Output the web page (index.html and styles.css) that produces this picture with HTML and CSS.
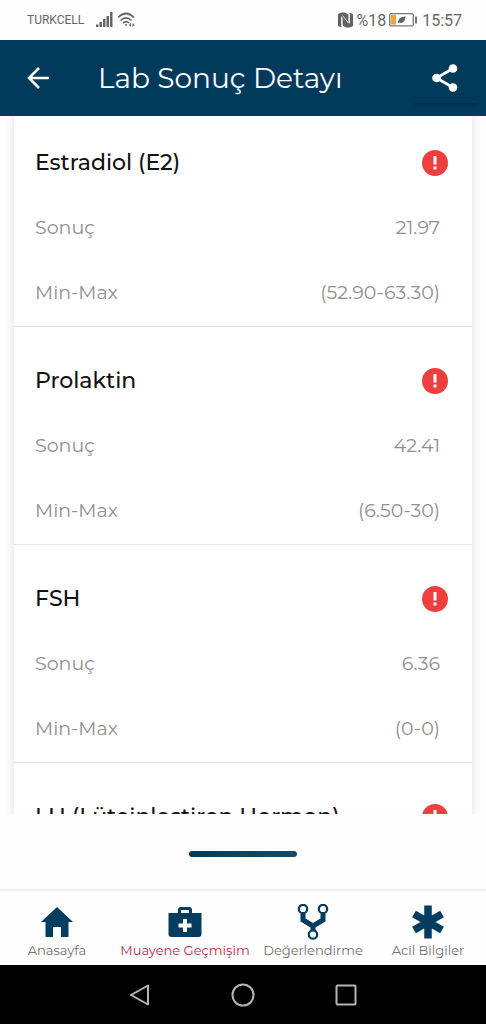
FILE: index.html
```html
<!DOCTYPE html>
<html lang="tr">
<head>
<meta charset="utf-8">
<meta name="viewport" content="width=device-width, initial-scale=1">
<title>Lab Sonuç Detayı</title>
<link rel="stylesheet" href="styles.css">
</head>
<body>
<div class="status">
  <div class="status-group">
    <span class="carrier">TURKCELL</span>
    <svg class="signal" width="17" height="16" viewBox="0 0 17 16" fill="#666"><path d="M0 12.500h2.500V15H0zM3.500 10H6v5H3.500zM7 7h2.500v8H7zM10.500 4H13v11h-2.500zM14 0h2.500v15H14z"/></svg>
    <svg width="18" height="16" viewBox="0 0 18 16" fill="none" stroke="#666" stroke-width="1.700"><path d="M1 5.500Q9-2.500 17 5.500M3.500 8.500Q9 3 14.500 8.500M6 11.200Q9 8 12 11"/><path d="M7.500 12.200h3l-1.500 2.300zM14 11l-2.200 2 2.200 2zM15.500 11l2.200 2-2.200 2z" fill="#666" stroke="none"/></svg>
  </div>
  <div class="status-group right">
    <svg width="15" height="16" viewBox="0 0 15 16"><path d="M3.500.5L0 2v12l3.500 1.500V5l7 8V2.800L7 .5zM11.500 15.500L15 14V2L11.500.5V11l-7-8v10.200L8 15.500z" fill="#626262"/><path d="M3.700 4.500v10M11.300 1.500v10M4.500 3.500l6 7.500" stroke="#fff" stroke-width=".8"/></svg>
    <span>%18</span>
    <svg class="battery" width="28" height="14" viewBox="0 0 28 14"><rect x=".7" y=".7" width="23.600" height="12.200" rx="1.500" fill="none" stroke="#777" stroke-width="1.300"/><path d="M2 2h5v9.600H2z" fill="#f2a23c"/><path d="M9 10.500C9 5 12 4 16.500 3.500 16 9 13 11 10 9.500z" fill="#626262"/><path d="M26 3.500h2v7h-2z" fill="#777"/></svg>
    <span>15:57</span>
  </div>
</div>
<header class="header">
  <button class="back" aria-label="Geri"><svg width="22" height="22" viewBox="0 0 22 22" fill="none" stroke="#fff" stroke-width="2.600"><path d="M22 11H2M12 1L2 11l10 10"/></svg></button>
  <h1>Lab Sonuç Detayı</h1>
  <button class="share" aria-label="Paylaş"><svg width="26" height="28" viewBox="0 0 26 28" fill="#fff"><path d="M21 4.500L4.500 14 21 23.500" fill="none" stroke="#fff" stroke-width="2.800"/><circle cx="21" cy="4.500" r="4.300"/><circle cx="4.500" cy="14" r="4.300"/><circle cx="21" cy="23.500" r="4.300"/></svg></button>
</header>
<main class="results">
  <div class="card">
    <section class="item">
      <div class="row"><h2>Estradiol (E2)</h2><svg class="alert" viewBox="0 0 26 26"><circle cx="13" cy="13" r="13" fill="#ed3f3d"/><path d="M11.500 6h3v8.500h-3zM11.500 16.500h3v3h-3z" fill="#fff"/></svg></div>
      <div class="row"><span>Sonuç</span><span>21.97</span></div>
      <div class="row"><span>Min-Max</span><span>(52.90-63.30)</span></div>
    </section>
    <section class="item">
      <div class="row"><h2>Prolaktin</h2><svg class="alert" viewBox="0 0 26 26"><circle cx="13" cy="13" r="13" fill="#ed3f3d"/><path d="M11.500 6h3v8.500h-3zM11.500 16.500h3v3h-3z" fill="#fff"/></svg></div>
      <div class="row"><span>Sonuç</span><span>42.41</span></div>
      <div class="row"><span>Min-Max</span><span>(6.50-30)</span></div>
    </section>
    <section class="item">
      <div class="row"><h2>FSH</h2><svg class="alert" viewBox="0 0 26 26"><circle cx="13" cy="13" r="13" fill="#ed3f3d"/><path d="M11.500 6h3v8.500h-3zM11.500 16.500h3v3h-3z" fill="#fff"/></svg></div>
      <div class="row"><span>Sonuç</span><span>6.36</span></div>
      <div class="row"><span>Min-Max</span><span>(0-0)</span></div>
    </section>
    <section class="item">
      <div class="row"><h2>LH (Lüteinleştiren Hormon)</h2><svg class="alert" viewBox="0 0 26 26"><circle cx="13" cy="13" r="13" fill="#ed3f3d"/><path d="M11.500 6h3v8.500h-3zM11.500 16.500h3v3h-3z" fill="#fff"/></svg></div>
    </section>
  </div>
</main>
<div class="handle"><div class="bar"></div></div>
<nav class="tabs">
  <a href="#home"><svg width="34" height="36" viewBox="0 0 34 36" fill="#043d5f"><path d="M17 3L1 18h4.500v15H13V23h8v10h7.500V18H33z"/></svg><span>Anasayfa</span></a>
  <a href="#history" class="active"><svg width="34" height="36" viewBox="0 0 34 36" fill="#043d5f"><path d="M11.500 10V6q0-1.500 1.500-1.500h8q1.500 0 1.500 1.500v4" fill="none" stroke="#043d5f" stroke-width="3"/><path fill-rule="evenodd" d="M.5 9h33v21q0 3-3 3h-27q-3 0-3-3zM15 15v4.500h-4.500v4H15V28h4v-4.500h4.500v-4H19V15z"/></svg><span>Muayene Geçmişim</span></a>
  <a href="#evaluation"><svg width="34" height="36" viewBox="0 0 34 36" fill="none" stroke="#043d5f"><path d="M7 10v6l10 6 10-6v-6M17 21v6" stroke-width="5"/><g fill="#fff" stroke-width="2.200"><circle cx="7" cy="5" r="4.200"/><circle cx="27" cy="5" r="4.200"/><circle cx="17" cy="30.500" r="4.200"/></g></svg><span>Değerlendirme</span></a>
  <a href="#emergency"><svg width="34" height="36" viewBox="0 0 34 36" fill="none" stroke="#043d5f" stroke-width="7.500"><path d="M17 1.500v33M3 10l28 16M31 10L3 26"/></svg><span>Acil Bilgiler</span></a>
</nav>
<div class="system">
  <button aria-label="Geri"><svg width="24" height="24" viewBox="0 0 24 24"><path d="M20 2.500v19L3 12z"/></svg></button>
  <button aria-label="Ana ekran"><svg width="24" height="24" viewBox="0 0 24 24"><circle cx="12" cy="12" r="10.500"/></svg></button>
  <button aria-label="Son uygulamalar"><svg width="24" height="24" viewBox="0 0 24 24"><rect x="2.500" y="2.500" width="19" height="19" rx="1"/></svg></button>
</div>
</body>
</html>
```
FILE: styles.css
```css
* { box-sizing: border-box; }
body {
  margin: 0;
  height: 100vh;
  display: flex;
  flex-direction: column;
  background: #fefefe;
  font-family: Montserrat, Inter, sans-serif;
}
button { background: none; border: 0; padding: 0; }
svg { display: block; flex: none; }
h1, h2 { margin: 0; }

.status {
  flex: none;
  height: 40px;
  padding: 0 24px 0 27px;
  display: flex;
  justify-content: space-between;
  align-items: center;
  font: 16px Roboto, sans-serif;
  color: #666;
}
.status-group { display: flex; align-items: center; gap: 4px; }
.right { gap: 3px; }
.carrier { font-size: 12px; margin-right: 8px; }
.battery { margin-right: 2px; }

.header {
  flex: none;
  height: 76px;
  padding: 0 8px 0 27px;
  display: flex;
  align-items: center;
  background: #023a5b;
  color: #fff;
}
.header h1 { flex: 1; margin-left: 49px; font-size: 28px; font-weight: 400; }
.share {
  width: 66px;
  height: 50px;
  display: grid;
  place-items: center;
  box-shadow: 0 3px 2px -2px #022d48;
}

.results { flex: 1; min-height: 0; overflow: hidden; padding: 0 14px; }
.card { background: #fff; box-shadow: 0 0 9px 1px #e4e4e4; }
.item { padding: 21px 24px 1px 21px; border-bottom: 1px solid #e5e5e5; }
.item:first-child { padding-top: 14px; }
.row {
  height: 65px;
  padding-right: 8px;
  display: flex;
  justify-content: space-between;
  align-items: center;
  font-size: 19px;
  color: #909090;
}
.row h2 { font-size: 22px; font-weight: 500; color: #111; }
.alert { width: 26px; height: 26px; margin-right: -8px; }

.handle { flex: none; height: 75px; display: grid; place-items: center; padding-top: 4px; }
.bar { width: 108px; height: 6px; border-radius: 3px; background: linear-gradient(90deg, #073a5b, #164b64); }

.tabs {
  flex: none;
  height: 76px;
  padding-top: 13px;
  display: grid;
  grid-template-columns: 114fr 142fr 114fr 116fr;
  border-top: 2px solid #f1f1f1;
}
.tabs a {
  display: flex;
  flex-direction: column;
  align-items: center;
  gap: 1px;
  color: #707070;
  font-size: 13px;
  line-height: 18px;
  text-decoration: none;
  white-space: nowrap;
}
.tabs .active { color: #b32850; }

.system {
  flex: none;
  height: 59px;
  display: flex;
  justify-content: center;
  align-items: center;
  gap: 79px;
  background: #000;
}
.system svg { fill: none; stroke: #b5b5b5; stroke-width: 2; stroke-linejoin: round; }
```
